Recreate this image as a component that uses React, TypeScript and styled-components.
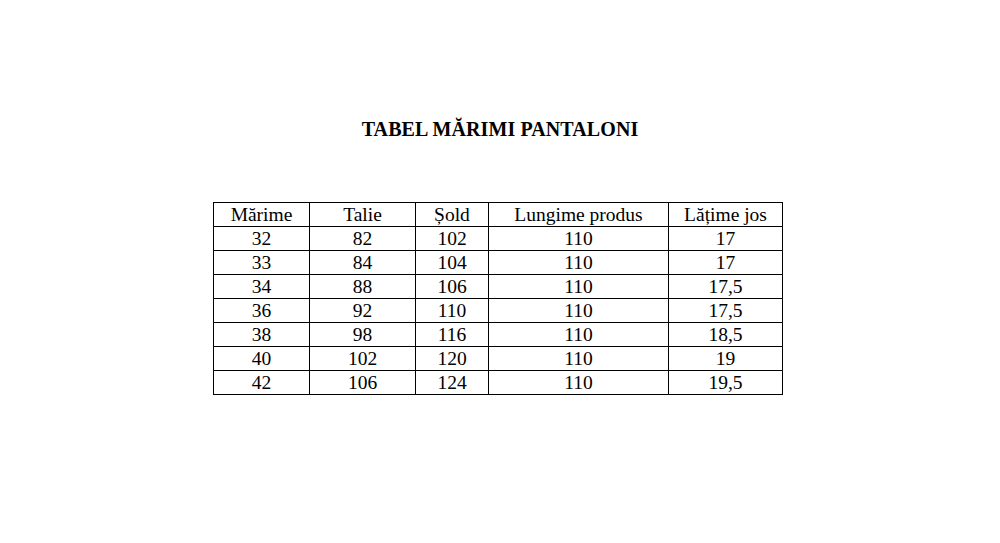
import styled, { createGlobalStyle } from "styled-components";

const GlobalStyle = createGlobalStyle`
  body {
    margin: 0;
    background: #ffffff;
    font-family: "Liberation Serif", "Times New Roman", serif;
    color: #000000;
  }
`;

const columns = [96, 106, 73, 180, 114];

const headers = ["Mărime", "Talie", "Șold", "Lungime produs", "Lățime jos"];

const rows = [
  ["32", "82", "102", "110", "17"],
  ["33", "84", "104", "110", "17"],
  ["34", "88", "106", "110", "17,5"],
  ["36", "92", "110", "110", "17,5"],
  ["38", "98", "116", "110", "18,5"],
  ["40", "102", "120", "110", "19"],
  ["42", "106", "124", "110", "19,5"],
];

const App = () => {
  return (
    <Page>
      <GlobalStyle />
      <Title>TABEL MĂRIMI PANTALONI</Title>
      <SizeTable>
        <colgroup>
          {columns.map((w, i) => (
            <col key={i} style={{ width: w }} />
          ))}
        </colgroup>
        <thead>
          <tr>
            {headers.map((h) => (
              <Cell as="th" key={h}>
                {h}
              </Cell>
            ))}
          </tr>
        </thead>
        <tbody>
          {rows.map((row, r) => (
            <tr key={r}>
              {row.map((v, c) => (
                <Cell key={c}>{v}</Cell>
              ))}
            </tr>
          ))}
        </tbody>
      </SizeTable>
    </Page>
  );
};

export default App;

const Page = styled.div`
  width: 1000px;
  height: 543px;
  display: flex;
  flex-direction: column;
  align-items: center;
  padding-top: 118px;
  box-sizing: border-box;
`;

const Title = styled.h1`
  margin: 0 0 62px 0;
  font-size: 20px;
  line-height: 22px;
  font-weight: 700;
  letter-spacing: 0.1px;
`;

const SizeTable = styled.table`
  border-collapse: collapse;
  table-layout: fixed;
  width: 570px;
  margin-left: -4px;
`;

const Cell = styled.td`
  border: 1px solid #000000;
  padding: 1px 0 1px 0;
  height: 21px;
  line-height: 21px;
  font-size: 19.5px;
  font-weight: 400;
  text-align: center;
  white-space: nowrap;
`;
